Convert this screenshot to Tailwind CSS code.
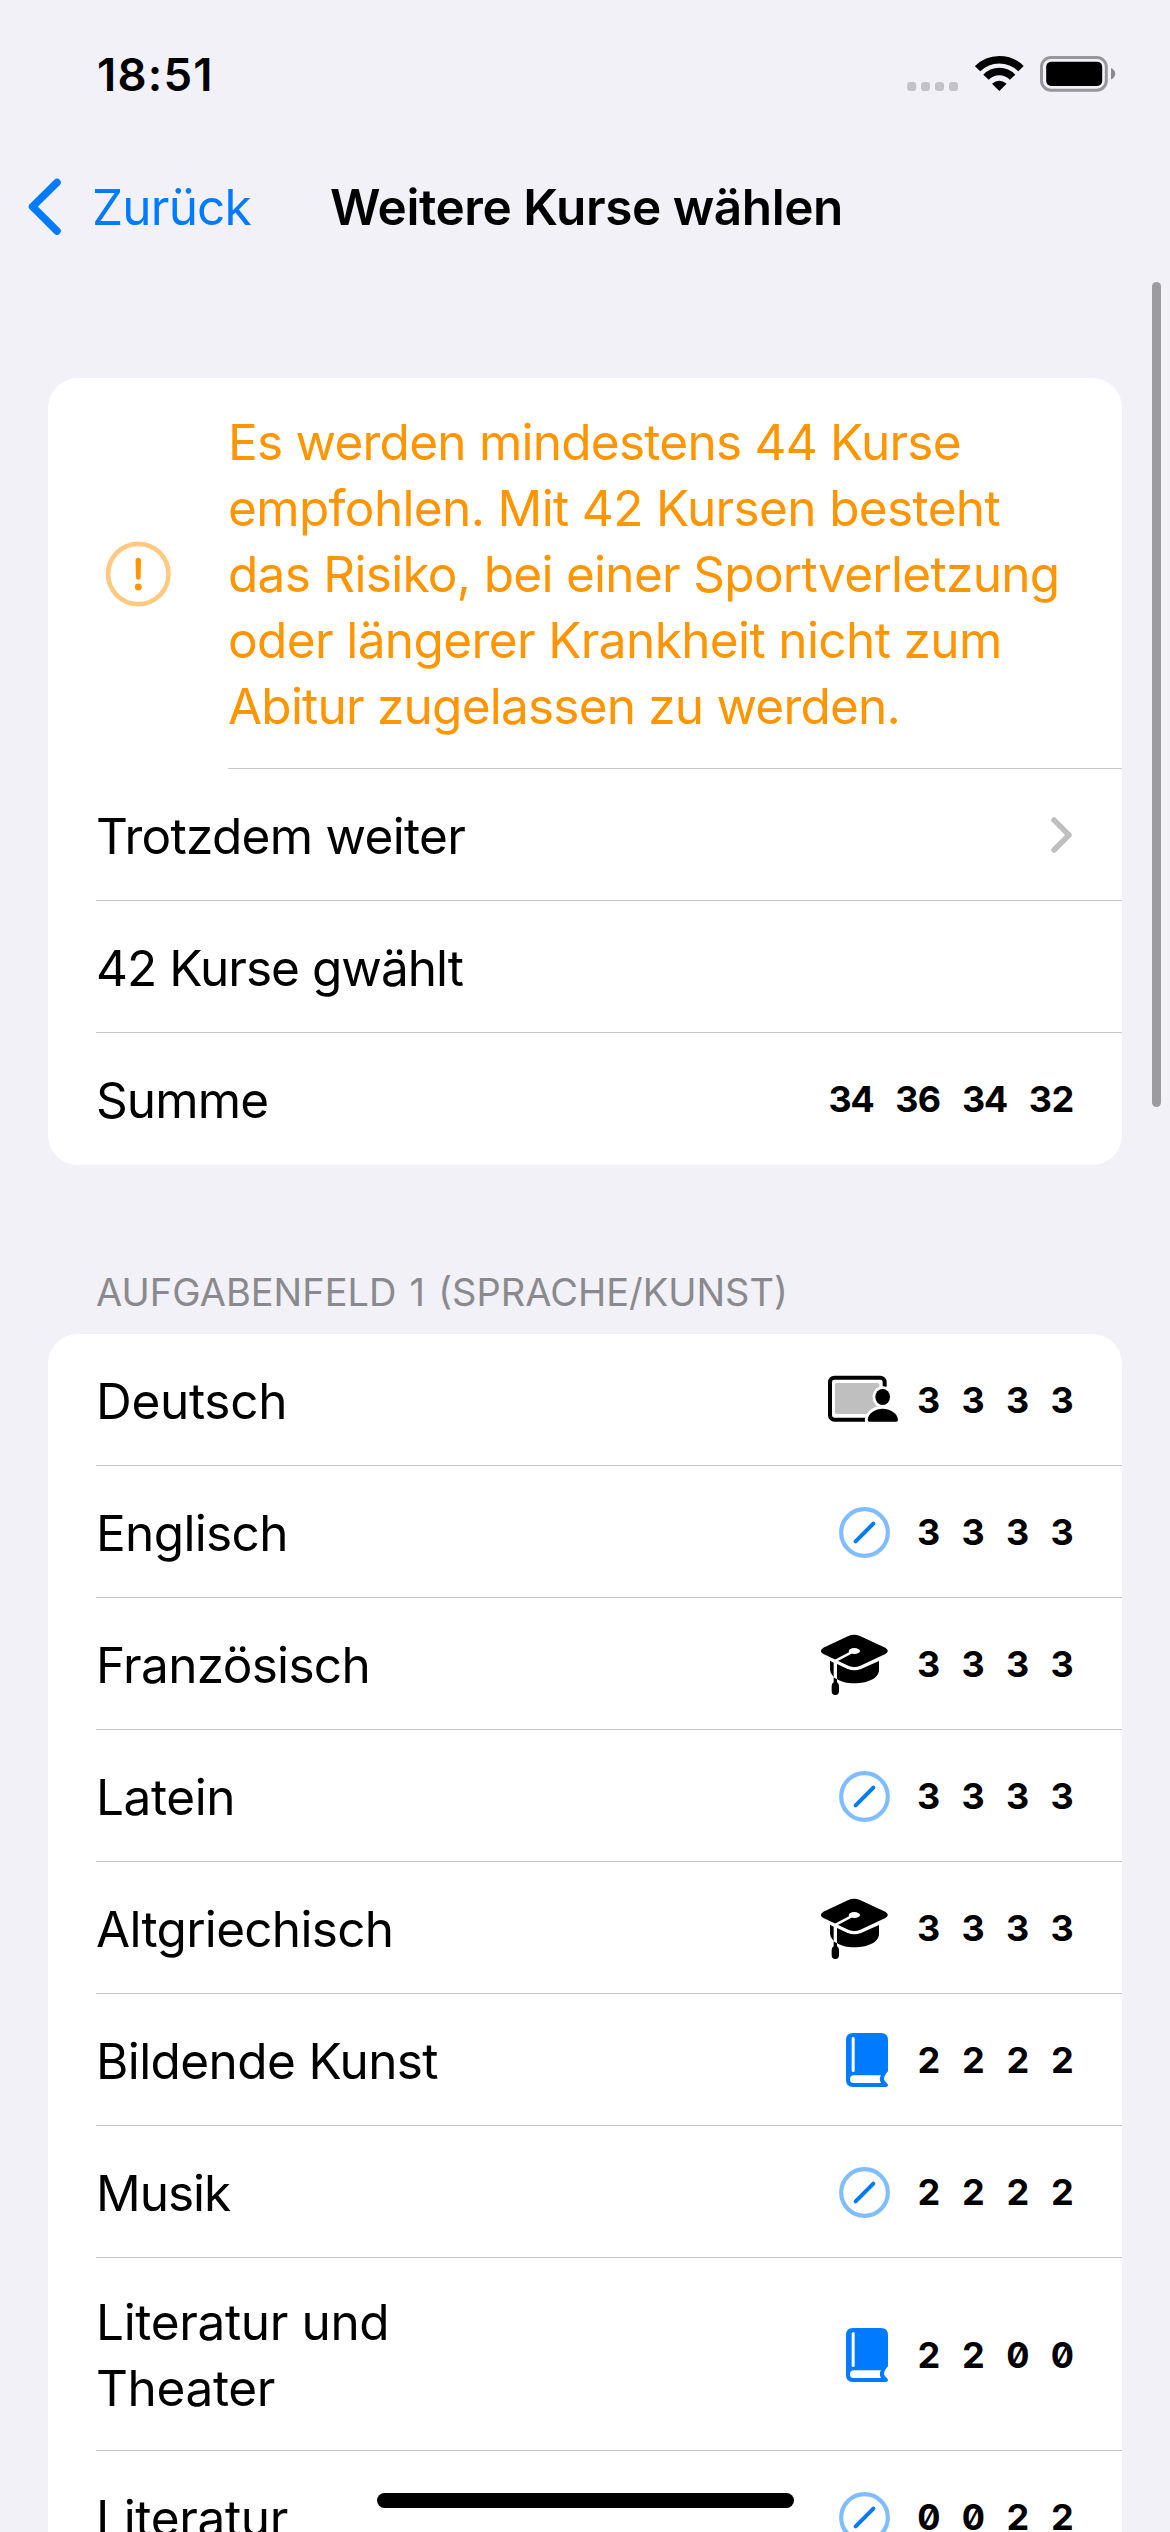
<!DOCTYPE html>
<html lang="de">
<head>
<meta charset="utf-8">
<title>Weitere Kurse wählen</title>
<script src="https://cdn.jsdelivr.net/npm/@tailwindcss/browser@4"></script>
</head>
<body class="relative h-[2532px] w-[1170px] overflow-hidden bg-[#f2f1f7] font-['Inter',sans-serif] text-[49.5px] leading-[66px] text-black">

<svg class="hidden">
  <symbol id="screen" viewBox="120 981 234 198">
    <rect x="150" y="1013" width="164" height="126" rx="13" fill="none" stroke="#000" stroke-width="12"/>
    <rect x="165" y="1029" width="133" height="93" rx="5" fill="#bfbfbf"/>
    <g stroke="#fff" stroke-width="17" stroke-linejoin="round">
      <ellipse cx="308" cy="1071" rx="22" ry="24"/>
      <path d="M268 1145Q263 1145 263 1139C265 1118 287 1106 308 1106C329 1106 352 1118 354 1139Q354 1145 348 1145Z"/>
    </g>
    <path d="M318 1040H345V1146H318Z" fill="#fff"/>
    <ellipse cx="308" cy="1071" rx="22" ry="24"/>
    <path d="M268 1145Q263 1145 263 1139C265 1118 287 1106 308 1106C329 1106 352 1118 354 1139Q354 1145 348 1145Z"/>
  </symbol>
  <symbol id="slash" viewBox="120 117 234 198">
    <circle cx="253.500" cy="217.500" r="70" fill="none" stroke="#80bdff" stroke-width="12.500"/>
    <path d="M227 244L280 191" stroke="#007aff" stroke-width="12" stroke-linecap="round"/>
  </symbol>
  <symbol id="cap" viewBox="120 513 234 198">
    <path d="M150 602L161 608V651Q150 640 150 629ZM171 612L203 627Q223 635 243 627L297 603V630C297 655 262 670 223 670C202 670 182 665 171 657Z"/>
    <path d="M205 528Q222 520 240 528L316 563Q331 573 316 582L241 617Q223 625 205 617L130 582Q115 573 130 563Z"/>
    <path d="M162 605L214 577" stroke="#fff" stroke-width="8"/>
    <ellipse cx="223" cy="573" rx="17" ry="9" fill="#fff"/>
    <path d="M161 652Q166 657 171 657V667Q177 670 177 678V694Q177 705 166 705Q155 705 155 694V678Q155 670 161 667Z"/>
  </symbol>
  <symbol id="book" viewBox="120 501 234 198">
    <path d="M219 519H303Q324 519 324 540V634Q312 646 312 657Q312 662 320 669Q324 672 324 675Q324 681 317 681H219Q198 681 198 660V540Q198 519 219 519Z" fill="#007aff"/>
    <rect x="215" y="531" width="9" height="105" rx="4.500" fill="#fff"/>
    <path d="M221 646H303Q296 657 303 669H221Q210 669 210 657.500Q210 646 221 646Z" fill="#fff"/>
  </symbol>
</svg>

<header>
  <div class="flex h-[149px] items-center justify-between pr-[54px] pl-[97px]">
    <span class="text-[45.5px] font-semibold tracking-[1.2px]">18:51</span>
    <div class="mb-[2px] flex">
      <svg class="mr-[17px] h-[37px] w-[51px]" viewBox="0 0 51 37" fill="#c3c2c7"><rect x=".2" y="27" width="9" height="9" rx="3"/><rect x="14" y="27" width="9" height="9" rx="3"/><rect x="28" y="27" width="9" height="9" rx="3"/><rect x="42" y="27" width="9" height="9" rx="3"/></svg>
      <svg class="mr-[16px] h-[37px] w-[49px]" viewBox="0 0 49 37"><g fill="none" stroke="#000" stroke-width="7.500"><path d="M2.600 13.700A30.500 30.500 0 0 1 46 13.700"/><path d="M11 22.300A18.200 18.200 0 0 1 37.600 22.300"/></g><path d="M24.300 36L17 28.700Q24.300 22.700 31.600 28.700Z"/></svg>
      <svg class="h-[37px] w-[76px]" viewBox="0 0 76 37"><rect x="1.500" y="2.500" width="64.800" height="32.700" rx="9.500" fill="none" stroke="#97969a" stroke-width="3"/><rect x="6.200" y="6.800" width="56" height="24.200" rx="5"/><path d="M71 13Q75.200 15 75.200 18.800Q75.200 22.600 71 24.600Z" fill="#8a8a8e"/></svg>
    </div>
  </div>
  <div class="flex h-[116px] items-center pl-[28px]">
    <svg class="h-[58px] w-[34px]" viewBox="0 0 34 58" fill="none" stroke="#007aff" stroke-width="7.500" stroke-linecap="round" stroke-linejoin="round"><path d="M29 4.500L4.500 28.700L29 53"/></svg>
    <span class="ml-[30px] w-[238px] tracking-[-0.8px] text-[#007aff]">Zurück</span>
    <h1 class="font-semibold tracking-[-0.43px] whitespace-nowrap">Weitere Kurse wählen</h1>
  </div>
</header>

<main class="px-[48px] pt-[113px]">
  <section class="rounded-[30px] bg-white">
    <div class="flex h-[391px]">
      <div class="flex w-[180px] items-center pl-[57px]">
        <svg class="h-[66px] w-[66px]" viewBox="0 0 66 66"><circle cx="33.300" cy="33" r="30.200" fill="none" stroke="#ffca80" stroke-width="4.700"/><path d="M30.600 19.300Q30.700 16.800 33.300 16.800T36 19.300L35.600 36.800Q35.500 38.800 33.300 38.800T31 36.800Z" fill="#ff9500"/><circle cx="33.300" cy="46" r="3.400" fill="#ff9500"/></svg>
      </div>
      <p class="w-[894px] border-b border-[#c6c6c8] pt-[31px] text-[#ff9500]">
        <span class="block tracking-[-0.75px]">Es werden mindestens 44 Kurse</span>
        <span class="block tracking-[-0.64px]">empfohlen. Mit 42 Kursen besteht</span>
        <span class="block tracking-[-0.7px]">das Risiko, bei einer Sportverletzung</span>
        <span class="block tracking-[-0.62px]">oder längerer Krankheit nicht zum</span>
        <span class="block tracking-[-0.78px]">Abitur zugelassen zu werden.</span>
      </p>
    </div>
    <div class="ml-[48px] flex h-[132px] items-center justify-between border-b border-[#c6c6c8] pt-px pr-[49px]">
      <span class="pt-[2px] tracking-[-0.7px]">Trotzdem weiter</span>
      <svg class="h-[38px] w-[23px]" viewBox="0 0 23 38" fill="none" stroke="#bfbfc0" stroke-width="5.500" stroke-linecap="round" stroke-linejoin="round"><path d="M4 4L19 19L4 34"/></svg>
    </div>
    <div class="ml-[48px] flex h-[132px] items-center border-b border-[#c6c6c8] pt-px">
      <span class="pt-[2px] tracking-[-0.95px]">42 Kurse gwählt</span>
    </div>
    <div class="ml-[48px] flex h-[132px] items-center justify-between pr-[48.400px]">
      <span class="pt-[2px] tracking-[-0.9px]">Summe</span>
      <div class="flex gap-[22.250px] text-[36px] font-bold tracking-[-1px] tabular-nums slashed-zero">
        <span class="flex w-[44.500px] justify-center">34</span><span class="flex w-[44.500px] justify-center">36</span><span class="flex w-[44.500px] justify-center">34</span><span class="flex w-[44.500px] justify-center">32</span>
      </div>
    </div>
  </section>

  <h2 class="flex h-[169px] items-end pb-[22px] pl-[48px] text-[38px] leading-[40px] [word-spacing:2.5px] text-[#8a8a8e]">AUFGABENFELD 1 (SPRACHE/KUNST)</h2>

  <section id="courses" class="rounded-t-[30px] bg-white"></section>
</main>

<div class="absolute top-[282px] left-[1152px] h-[825px] w-[9px] rounded-full bg-[#9c9ba0]"></div>
<div class="absolute top-[2493px] left-[377px] h-[15px] w-[417px] rounded-full bg-black"></div>

<script>
const courses = [
  ['Deutsch', 'screen', '3333', 'tracking-[-0.3px]'],
  ['Englisch', 'slash', '3333', 'tracking-[-0.65px]'],
  ['Französisch', 'cap', '3333', 'tracking-[-0.68px]'],
  ['Latein', 'slash', '3333', 'tracking-[-0.4px]'],
  ['Altgriechisch', 'cap', '3333', 'tracking-[-0.7px]'],
  ['Bildende Kunst', 'book', '2222', 'tracking-[-0.6px]'],
  ['Musik', 'slash', '2222', 'tracking-[-1px]'],
  ['Literatur und<br>Theater', 'book', '2200', 'tracking-[-0.35px]'],
  ['Literatur', 'slash', '0022', 'tracking-[-0.35px]'],
];
document.getElementById('courses').innerHTML = courses.map(([name, icon, hours, tracking]) => `
  <div class="ml-[48px] flex ${name.includes('<br>') ? 'h-[193px]' : 'h-[132px]'} items-center border-b border-[#c6c6c8] pt-px pr-[48.400px]">
    <span class="grow ${name.includes('<br>') ? 'pt-0' : 'pt-[2px]'} ${tracking}">${name}</span>
    <svg class="mr-[20px] h-[66px] w-[78px]"><use href="#${icon}"/></svg>
    <div class="flex gap-[22.250px] text-[36px] font-bold tabular-nums slashed-zero">
      ${[...hours].map(h => `<span class="flex w-[22.250px] justify-center">${h}</span>`).join('')}
    </div>
  </div>`).join('');
</script>
</body>
</html>
